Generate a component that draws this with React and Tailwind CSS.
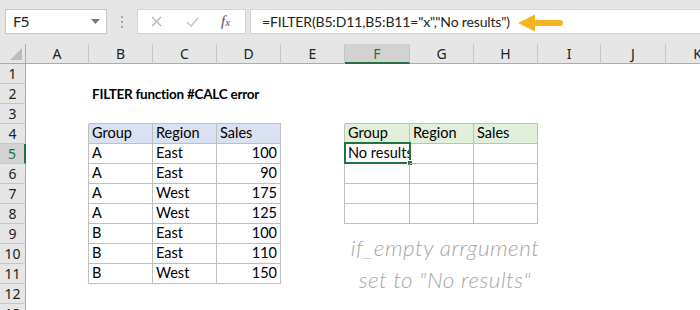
import React from "react";

const widths = [26, 63, 64, 64, 64, 64, 65, 64, 64, 63, 65, 64];
const letters = ["A", "B", "C", "D", "E", "F", "G", "H", "I", "J", "K"];

const cells = {
  "2-1": { v: "FILTER function #CALC error", bold: true },
  "4-1": { v: "Group" }, "4-2": { v: "Region" }, "4-3": { v: "Sales" },
  "5-1": { v: "A" }, "5-2": { v: "East" }, "5-3": { v: "100", right: true },
  "6-1": { v: "A" }, "6-2": { v: "East" }, "6-3": { v: "90", right: true },
  "7-1": { v: "A" }, "7-2": { v: "West" }, "7-3": { v: "175", right: true },
  "8-1": { v: "A" }, "8-2": { v: "West" }, "8-3": { v: "125", right: true },
  "9-1": { v: "B" }, "9-2": { v: "East" }, "9-3": { v: "100", right: true },
  "10-1": { v: "B" }, "10-2": { v: "East" }, "10-3": { v: "110", right: true },
  "11-1": { v: "B" }, "11-2": { v: "West" }, "11-3": { v: "150", right: true },
  "4-5": { v: "Group" }, "4-6": { v: "Region" }, "4-7": { v: "Sales" },
  "5-5": { v: "No results", clip: true },
};

function inLeft(r, c) { return r >= 4 && r <= 11 && c >= 1 && c <= 3; }
function inRight(r, c) { return r >= 4 && r <= 8 && c >= 5 && c <= 7; }

function cellClass(r, c) {
  let cls = "relative h-[20px] shrink-0 box-border flex items-end px-[3px] pb-[1px] border-[#bfbfbf]";
  if (inLeft(r, c) || inRight(r, c)) cls += " border-r border-b";
  else {
    if (inLeft(r, c + 1) || inRight(r, c + 1)) cls += " border-r";
    if (inLeft(r + 1, c) || inRight(r + 1, c)) cls += " border-b";
  }
  if (r === 4 && inLeft(r, c)) cls += " bg-[#d9e1f2]";
  if (r === 4 && inRight(r, c)) cls += " bg-[#e2efda]";
  return cls;
}

function Toolbar() {
  return (
    <div className="relative h-[44px] bg-[#e6e6e6] flex pl-[5px] pt-[9px] font-['Noto_Sans',sans-serif]">
      <div className="w-[102px] h-[25px] bg-white border border-[#c6c6c6] flex items-center pl-[7px] pr-[6px] justify-between text-[15px] text-[#222]">
        <span>F5</span>
        <svg width="9" height="5" viewBox="0 0 9 5"><path d="M0 0h9L4.5 5z" fill="#777" /></svg>
      </div>
      <div className="w-[30px] h-[25px] flex flex-col items-center justify-center gap-[3px]">
        <span className="w-[2px] h-[2px] bg-[#a6a6a6]" />
        <span className="w-[2px] h-[2px] bg-[#a6a6a6]" />
        <span className="w-[2px] h-[2px] bg-[#a6a6a6]" />
      </div>
      <div className="w-[109px] h-[25px] bg-white border border-[#d4d4d4] flex items-center">
        <svg className="ml-[13px]" width="11" height="11" viewBox="0 0 11 11"><path d="M1 1l9 9M10 1l-9 9" stroke="#b4b4b4" strokeWidth="1.3" /></svg>
        <svg className="ml-[24px]" width="13" height="10" viewBox="0 0 13 10"><path d="M1 5l4 4 7-8" stroke="#c8c8c8" strokeWidth="1.6" fill="none" /></svg>
        <span className="ml-[22px] font-['Liberation_Serif',serif] italic text-[15px] text-[#555]">f<span className="text-[11px]">x</span></span>
      </div>
      <div className="ml-[4px] flex-1 h-[25px] bg-white border border-r-0 border-[#d4d4d4] flex items-center pl-[11px] text-[14px] tracking-[-0.15px] text-[#222] whitespace-nowrap font-['Lato',sans-serif]">
        =FILTER(B5:D11,B5:B11="x","No results")
      </div>
      <svg className="absolute left-[516px] top-[13px]" width="48" height="20" viewBox="0 0 48 20">
        <path d="M2 10L19 1.5V18.5Z" fill="#f4b422" />
        <path d="M17 10H44" stroke="#f4b422" strokeWidth="6" strokeLinecap="round" />
      </svg>
    </div>
  );
}

function HeaderRow() {
  return (
    <div className="flex h-[20px] font-['Noto_Sans',sans-serif] text-[14px] text-[#222]">
      <div className="w-[26px] shrink-0 box-border bg-[#e6e6e6] border-r border-b border-[#ababab] relative">
        <svg className="absolute right-[3px] bottom-[3px]" width="12" height="12" viewBox="0 0 12 12"><path d="M12 0V12H0Z" fill="#bdbdbd" /></svg>
      </div>
      {letters.map((l, i) => {
        const sel = l === "F";
        return (
          <div
            key={l}
            style={{ width: widths[i + 1] }}
            className={
              sel
                ? "shrink-0 box-border flex items-center justify-center bg-[#d2d2d2] border-r border-[#c6c6c6] border-b-2 border-b-[#217346] text-[#217346]"
                : "shrink-0 box-border flex items-center justify-center bg-[#e6e6e6] border-r border-[#c6c6c6] border-b border-b-[#ababab]"
            }
          >
            {l}
          </div>
        );
      })}
    </div>
  );
}

function Row({ r }) {
  const sel = r === 5;
  return (
    <div className="flex h-[20px]">
      <div
        className={
          sel
            ? "w-[26px] shrink-0 box-border flex items-center justify-center bg-[#d2d2d2] border-b border-[#c6c6c6] border-r-2 border-r-[#217346] text-[#217346] font-['Noto_Sans',sans-serif] text-[14px]"
            : "w-[26px] shrink-0 box-border flex items-center justify-center bg-[#e6e6e6] border-b border-[#c6c6c6] border-r border-r-[#ababab] text-[#222] font-['Noto_Sans',sans-serif] text-[14px]"
        }
      >
        {r}
      </div>
      {letters.map((l, i) => {
        const c = i;
        const d = cells[`${r}-${c}`];
        return (
          <div key={l} style={{ width: widths[i + 1] }} className={cellClass(r, c) + (d && d.right ? " justify-end" : "")}>
            {d && (
              <span
                className={
                  (d.bold ? "font-bold text-[13.5px] tracking-[-0.25px] " : "text-[14.5px] ") +
                  (d.clip ? "w-[62px] shrink-0 overflow-hidden " : "") +
                  "whitespace-nowrap leading-[18px] text-black"
                }
              >
                {d.v}
              </span>
            )}
            {r === 5 && c === 5 && (
              <div className="absolute -left-[1px] -top-[2px] w-[67px] h-[22px] border-2 border-[#217346]">
                <div className="absolute -right-[4px] -bottom-[4px] w-[6px] h-[6px] bg-[#217346] border border-white" />
              </div>
            )}
          </div>
        );
      })}
    </div>
  );
}

export default function App() {
  const rows = [1, 2, 3, 4, 5, 6, 7, 8, 9, 10, 11, 12, 13];
  return (
    <div className="w-[700px] h-[310px] overflow-hidden bg-white font-['Lato',sans-serif]">
      <Toolbar />
      <div className="relative">
        <HeaderRow />
        {rows.map((r) => (
          <Row key={r} r={r} />
        ))}
        <div className="absolute left-[325px] top-[188px] w-[240px] text-center text-[#a6a6a6] text-[22.5px] leading-[32px] italic font-light font-['Lato',sans-serif] tracking-[0.5px]">
          <div>if_empty arrgument</div>
          <div>set to "No results"</div>
        </div>
      </div>
    </div>
  );
}
